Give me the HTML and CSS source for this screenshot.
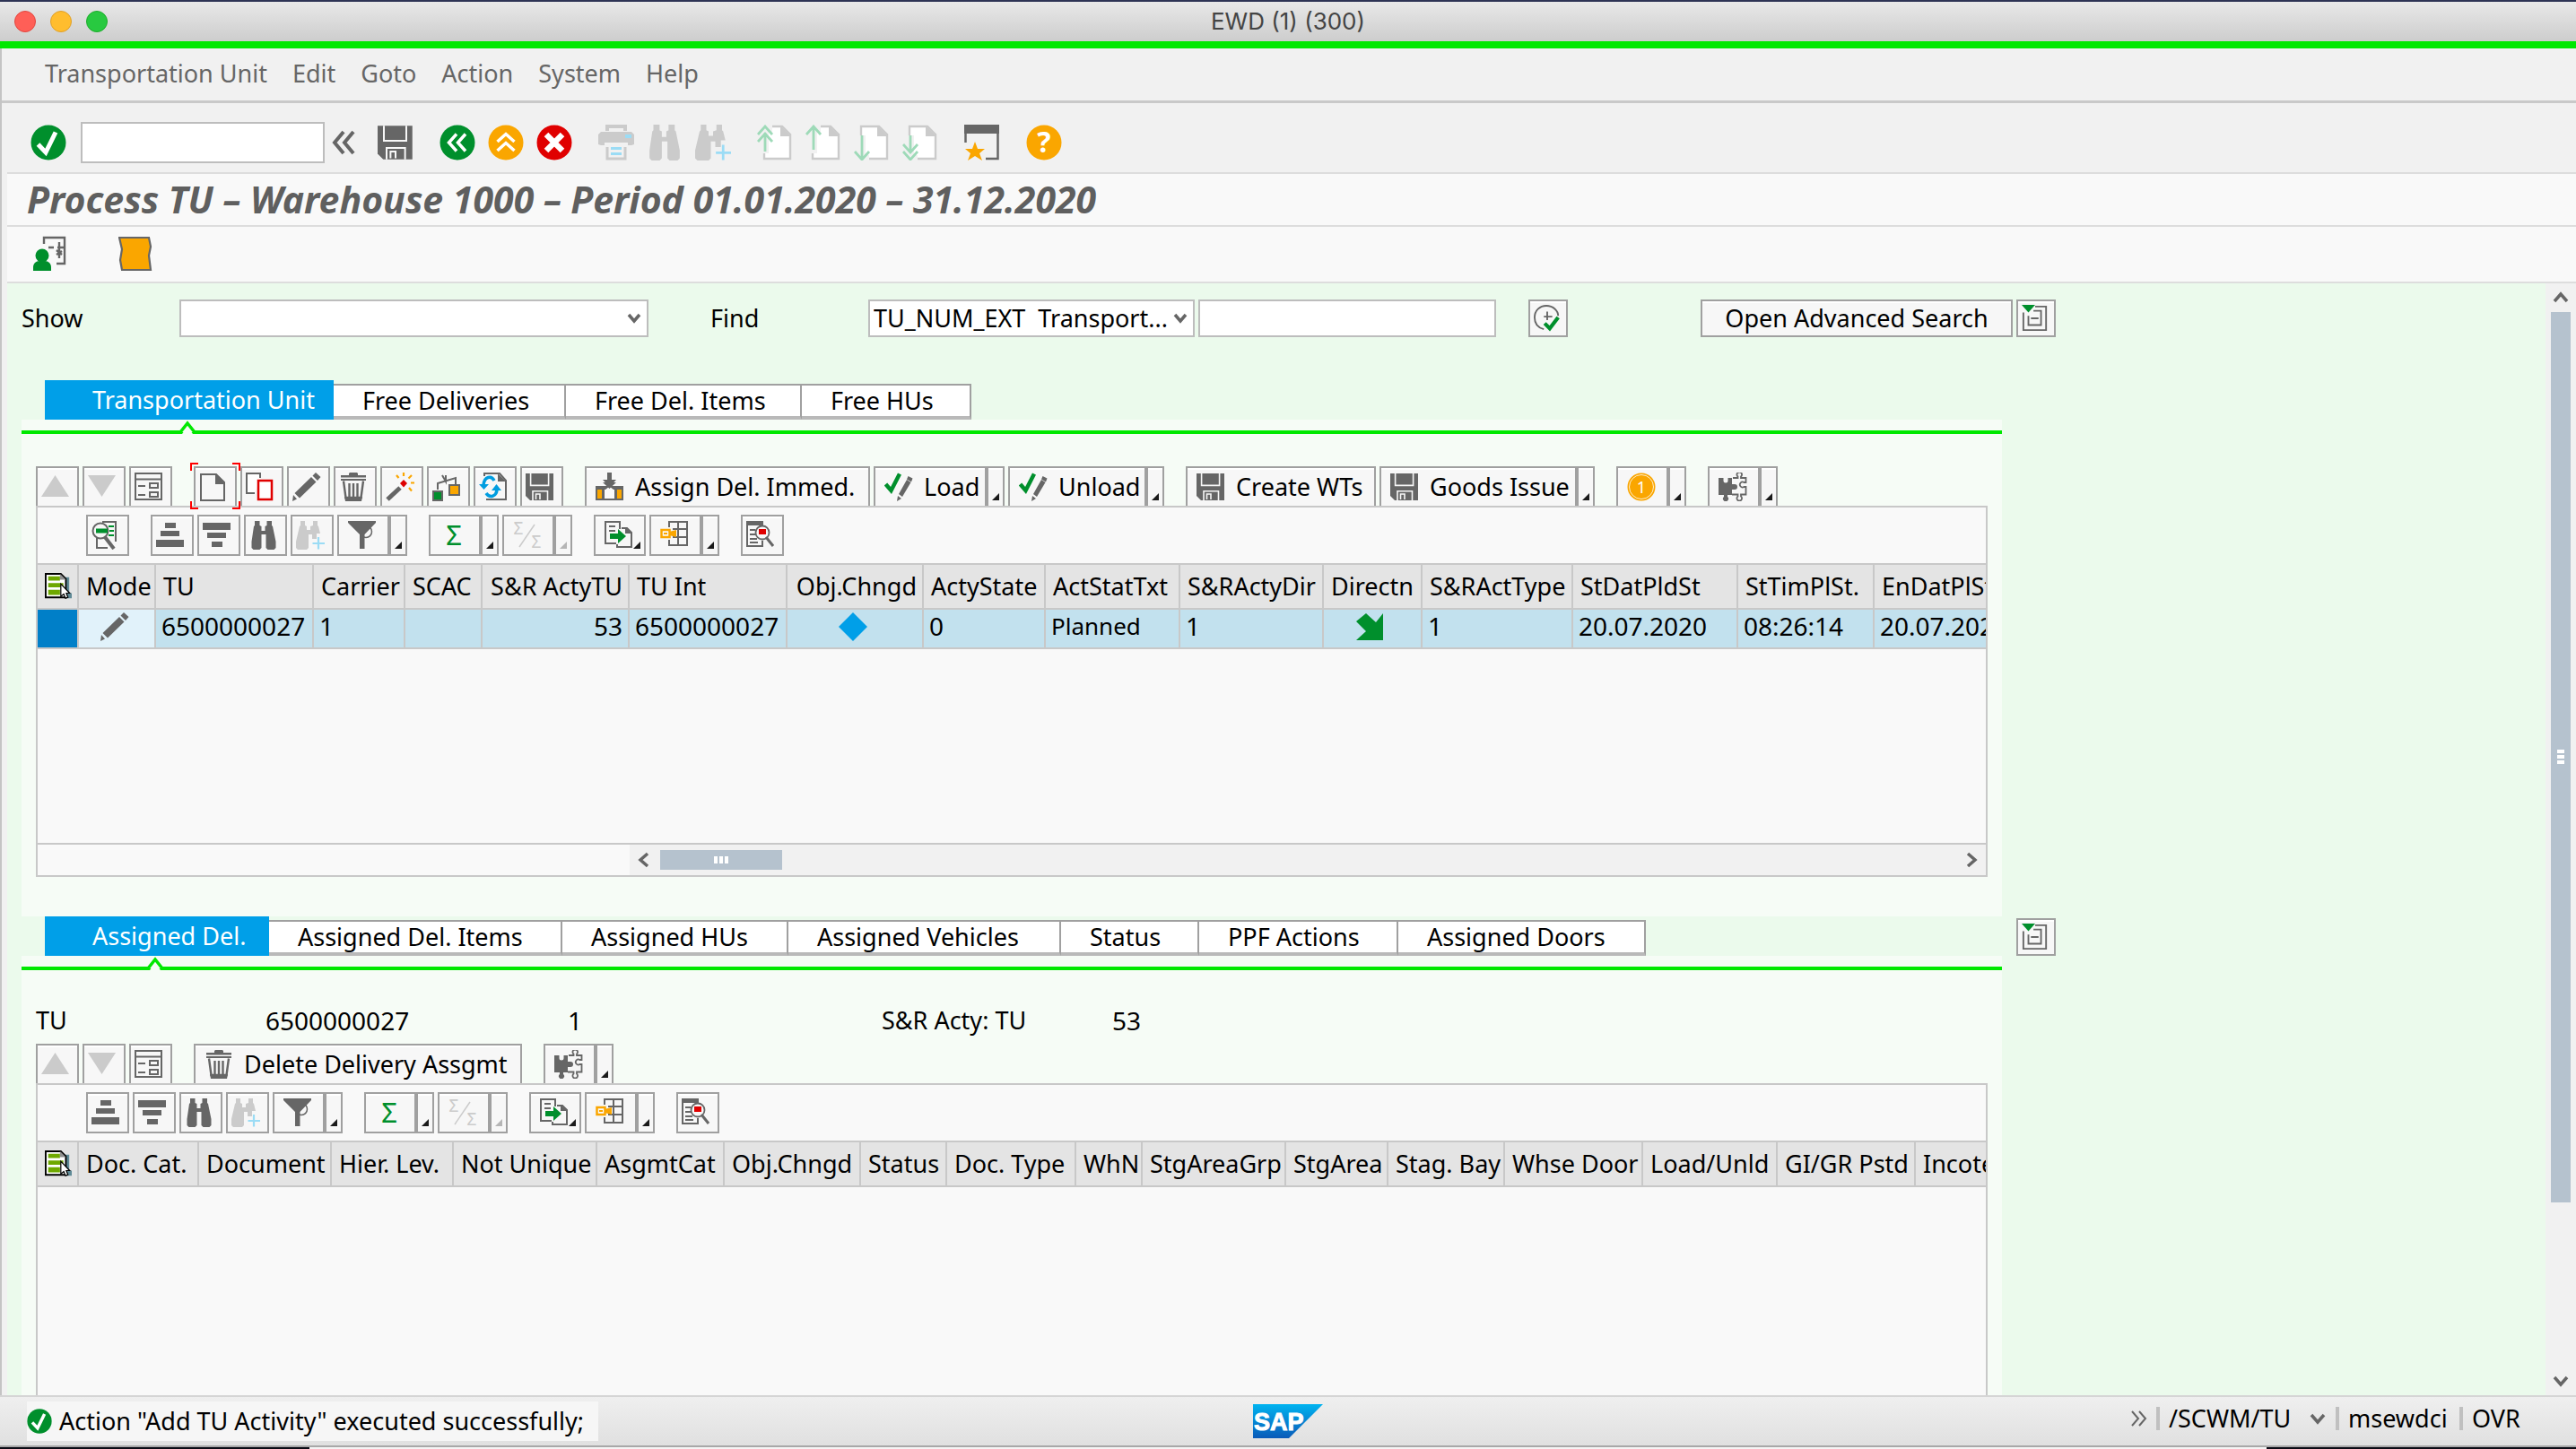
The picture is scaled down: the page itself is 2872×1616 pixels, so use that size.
FILE: index.html
```html
<!DOCTYPE html>
<html lang="en">
<head>
<meta charset="utf-8">
<title>EWD (1) (300)</title>
<link rel="stylesheet" href="styles.css">
</head>
<body>
<svg class="sprite" aria-hidden="true">
  <symbol id="i-save" viewBox="0 0 32 32"><path fill="currentColor" d="M0 1h31v30H5l-5-5z"/><path fill="none" stroke="#f7f7f7" stroke-width="1.6" d="M5.6 1v13.4h20V1M8 31V20.8h16.500V31M11.500 30v-6h4.500v6"/></symbol>
  <symbol id="i-binoc" viewBox="0 0 32 32"><path fill="currentColor" d="M6 0h5.500v5l2 1v5h4V6l2-1V0H25v5l1 1 3.500 17v7l-2 2h-7l-2-2V15h-5v15l-2 2h-7l-2-2v-7L5 6l1-1z"/></symbol>
  <symbol id="i-binocplus" viewBox="0 0 32 32"><path fill="#cbcbcb" d="M5 0h5v5l2 1v4h4V6l3-1V0h5v5l1 1 2 8h-4v6h-5v-5h-4v15l-2 2H2l-2-2v-7L4 6l1-1z"/><path stroke="#9bdcf5" stroke-width="2.200" d="M25 18v13.500M18.500 25H32"/></symbol>
  <symbol id="i-up" viewBox="0 0 32 32"><path fill="#cbcbcb" d="M15.500 3 31 27H0z"/></symbol>
  <symbol id="i-down" viewBox="0 0 32 32"><path fill="#cbcbcb" d="M0 3h31L15.500 27z"/></symbol>
  <symbol id="i-form" viewBox="0 0 32 32"><path fill="none" stroke="#666" stroke-width="2" d="M1 1h29v29H1zM1 7.500h29M17 12h9v5h-9zM17 22h9v5h-9zM4 15h8M4 25h8"/></symbol>
  <symbol id="i-new" viewBox="0 0 32 32"><path fill="none" stroke="#666" stroke-width="2" d="M2 2h17l9 9v20H2z"/><path fill="#666" d="M18 1v12h11z"/></symbol>
  <symbol id="i-copy" viewBox="0 0 32 32"><path fill="#fff" stroke="#666" stroke-width="2" d="M16 6V1H1v22h9"/><path fill="#fff" stroke="#e00000" stroke-width="2.500" d="M14 9h15v21H14z"/></symbol>
  <symbol id="i-pencil" viewBox="0 0 32 32"><path fill="#666" d="m0 32 1-7 4 4.500zM2.500 23 21 5l5.500 5.500L8 28.500zM22.500 3.500 26 0l5.500 5-3.500 4z"/></symbol>
  <symbol id="i-trash" viewBox="0 0 32 32"><path fill="#666" d="M11 1 12 0h8l1 1v2h9v2.500H2V3h9zM2 7h28v2H2z"/><path fill="none" stroke="#666" stroke-width="2.400" d="M5 9.500 7.500 28h17L27 9.500M11.500 12v15M16 12v15M20.500 12v15"/><path fill="#666" d="M6 27h20l-1 5H7z"/></symbol>
  <symbol id="i-wand" viewBox="0 0 32 32"><path stroke="#666" stroke-width="5" d="M2 30 16 17"/><path fill="#d00" d="m20 8 4 4-4 4.500-4-4.500z"/><path stroke="#faa600" stroke-width="2.200" d="M20 0v4M12 3l2.500 3M29 3l-3.500 3.500M28 11.500h4M26 17l3 3.500"/></symbol>
  <symbol id="i-assignbox" viewBox="0 0 32 32"><path fill="none" stroke="#666" stroke-width="2" d="M6 19v-7L26 6v8M15 3v7l-4-7"/><path fill="#008f2c" stroke="#666" stroke-width="2" d="M1 21h10v10H1z"/><path fill="#faa600" stroke="#666" stroke-width="2" d="M19 14h11v11H19z"/></symbol>
  <symbol id="i-refresh" viewBox="0 0 32 32"><path fill="none" stroke="#666" stroke-width="2" d="M6 4V1h17l7 8v21H8"/><path fill="#666" d="M21 1v9h9z"/><path fill="none" stroke="#009de0" stroke-width="3.500" d="M17 9c-3-6-11-5-12 5M8 23c4 6 12 4 12-5"/><path fill="#009de0" d="M0 13h11l-5.500 6zM14 20h11l-5.500-7z"/></symbol>
  <symbol id="i-inbox" viewBox="0 0 32 32"><path fill="#666" d="M13 0h5v8h5l-7.500 8L8 8h5zM0 15h31v16H0z"/><path fill="#faa600" d="M2 19h5v10H2zM24 19h5v10h-5z"/><path fill="#fafafa" d="M10 19h1l4.500-3.500L20 19h1v10H10z"/><path fill="#666" d="m8 11 7.500 7 7.500-7z"/></symbol>
  <symbol id="i-load" viewBox="0 0 32 32"><path fill="none" stroke="#008f2c" stroke-width="4.500" d="m1.500 13 6 7L17 1.500"/><path fill="#666" d="m14 32 1-6 4 3zM16 24 25 8l4.500 3-9.500 16zM26.500 4l5 2.500-1.500 4-5-3z"/></symbol>
  <symbol id="i-coin" viewBox="0 0 32 32"><circle cx="16" cy="16" r="15.500" fill="#faa600"/><circle cx="16" cy="16" r="13.500" fill="none" stroke="#fff" stroke-width=".8"/><text x="16" y="22.500" text-anchor="middle" font-size="18" fill="#fff">1</text></symbol>
  <symbol id="i-puzzle" viewBox="0 0 32 32"><path fill="#666" d="M0 6h5.500v3a2.500 2.500 0 0 0 5 0V6H15v7h3a3 3 0 0 1 0 6h-3v6h-5v2a3 3 0 1 1-4 0v-2H0z"/><path fill="none" stroke="#666" stroke-width="1.800" d="M16 6h5.500V4.500a2.800 2.800 0 1 1 3.500 0V6h5.500v5h-2a3 3 0 1 0 0 5h2v8.500H25v2a2.800 2.800 0 1 1-3.500 0v-2H15"/></symbol>
  <symbol id="i-detail" viewBox="0 0 32 32"><path fill="none" stroke="#666" stroke-width="2" d="M12 1h15v22M6 18v12h12"/><circle cx="10" cy="11" r="8.500" fill="#f7f7f7" stroke="#666" stroke-width="2"/><path stroke="#666" stroke-width="4" d="m15 18 10 13"/><path stroke="#008f2c" stroke-width="5" d="M5 11h13"/><path stroke="#008f2c" stroke-width="2" d="M19 6h6M20 11h5M19 16h6"/></symbol>
  <symbol id="i-asc" viewBox="0 0 32 32"><path fill="#666" d="M10 2h12v6H10zM5 11h21v6H5zM0 21h31v8H0z"/></symbol>
  <symbol id="i-desc" viewBox="0 0 32 32"><path fill="#666" d="M0 2h31v8H0zM5 13h21v6H5zM10 23h12v6H10z"/></symbol>
  <symbol id="i-funnel" viewBox="0 0 32 32"><circle cx="20" cy="12" r="6.500" fill="none" stroke="#666" stroke-width="1.500"/><path fill="#666" d="M0 0h31v2L18.500 15v16H13V15L0 2z"/></symbol>
  <symbol id="i-sum" viewBox="0 0 32 32"><text x="16" y="27" text-anchor="middle" font-size="31" fill="#008f2c">Σ</text></symbol>
  <symbol id="i-subsum" viewBox="0 0 32 32"><g fill="#cbcbcb"><text x="6" y="15" text-anchor="middle" font-size="19">Σ</text><text x="26" y="30" text-anchor="middle" font-size="19">Σ</text></g><path stroke="#cbcbcb" stroke-width="1.500" d="M7 29 24 4"/></symbol>
  <symbol id="i-export" viewBox="0 0 32 32"><path fill="none" stroke="#666" stroke-width="2" d="M17 9V1H1v24h12M5 6h7M5 11h7M19 8h6l5 5v16H14v-3"/><path fill="#666" d="M23 7v7h8z"/><path fill="#008f2c" d="M6 14h9V9l9 8-9 8v-5H6z"/></symbol>
  <symbol id="i-layout" viewBox="0 0 32 32"><path fill="none" stroke="#666" stroke-width="2" d="M9 1h22M30 1v26M9 27h22M20 1v26M10 1v6M10 21v6M14 9h16M14 18h16"/><path fill="#f9f9f9" stroke="#faa600" stroke-width="2.500" d="M1.500 10h9v8h-9z"/><path fill="#faa600" d="M4 13h4v2H4zM10 12l8-2v8l-8-2z"/></symbol>
  <symbol id="i-audit" viewBox="0 0 32 32"><path fill="#666" d="M0 0h19v5H0z"/><path fill="none" stroke="#666" stroke-width="2" d="M1 3v25h17v-6M4 10h6M4 15h7M4 20h8M4 24h9"/><circle cx="18" cy="13" r="7.500" fill="#f7f7f7" stroke="#666" stroke-width="1.800"/><path stroke="#666" stroke-width="3" d="m22 18 8 10"/><path fill="#e00000" d="M14 9h8v6h-8z"/></symbol>
  <symbol id="i-clock" viewBox="0 0 32 32"><path fill="none" stroke="#666" stroke-width="2" d="M12 29C4 27 1 21 1 15 1 7 7 1 15 1s14 6 14 12M16 8v10M12 14h10"/><path fill="none" stroke="#008f2c" stroke-width="4.500" d="m13 22 6 6 10-13"/></symbol>
  <symbol id="i-collapse" viewBox="0 0 32 32"><path fill="none" stroke="#666" stroke-width="2" d="M2 9v21h27V2H16M8 13v11h15V7h-9M11 16h9"/><path fill="#008f2c" d="M0 0h16L8 9z"/></symbol>
  <symbol id="i-cols" viewBox="0 0 32 32"><path fill="#5f8a96" d="M24 5h5v19h3v6H24z"/><path fill="#fff" stroke="#000" stroke-width="2" d="M1 1h18l6 6v22H1z"/><path fill="#6ea800" d="M4 4h14v5H4zM4 12h18v5H4zM4 20h14v6H4z"/><path fill="#8f8f8f" d="M18 1v7h7z"/><path fill="#fff" stroke="#000" stroke-width="1.300" d="M19 13v15l3.500-3 2 5 3-1-2-5h4z"/></symbol>
  <symbol id="i-ok" viewBox="0 0 40 40"><circle cx="20" cy="20" r="19.500" fill="#008f2c"/><path fill="none" stroke="#fff" stroke-width="5" d="m8.500 22 8.500 9L28 8.500"/></symbol>
  <symbol id="i-fold" viewBox="0 0 32 40"><path fill="none" stroke="#666" stroke-width="4" d="M17 8 7 20l10 12M28 8 18 20l10 12"/></symbol>
  <symbol id="i-back" viewBox="0 0 40 40"><circle cx="20" cy="20" r="19.500" fill="#008f2c"/><path fill="none" stroke="#fff" stroke-width="3.500" d="m19 10.500-8.500 9.500 8.500 9.500M29 10.500 20.500 20l8.500 9.500"/></symbol>
  <symbol id="i-exit" viewBox="0 0 40 40"><circle cx="20" cy="20" r="19.500" fill="#faa600"/><path fill="none" stroke="#fff" stroke-width="3.500" d="m10.500 19 9.500-8.500 9.500 8.500M10.500 29l9.500-8.500 9.500 8.500"/></symbol>
  <symbol id="i-cancel" viewBox="0 0 40 40"><circle cx="20" cy="20" r="19.500" fill="#e00000"/><path stroke="#fff" stroke-width="6.500" d="m11 11 18 18M29 11 11 29"/></symbol>
  <symbol id="i-print" viewBox="0 0 40 40"><path fill="#cbcbcb" d="M8 0h24v7h-4V4H12v3H8zM3 8h34l3 3v11l-3 1h-4v-3H7v3H3l-3-1V11z"/><path fill="none" stroke="#cbcbcb" stroke-width="3" d="M10 25v13h20V25"/><path fill="#9bdcf5" d="M30 11h7v4h-7zM14 25h12v3H14zM14 31h12v3H14z"/></symbol>
  <symbol id="i-page" viewBox="0 0 40 40"><path fill="#fff" stroke="#cbcbcb" stroke-width="2.400" d="M8 2h20l9 9v27H8z"/><path fill="#cbcbcb" d="M26 1v12h12z"/></symbol>
  <symbol id="i-first" viewBox="0 0 40 40"><use href="#i-page"/><path stroke="#f1f1f1" stroke-width="10" d="M8 0v32M12 0v8"/><path fill="none" stroke="#9edab8" stroke-width="2.800" d="M9 30V9M1 19l8-9 8 9M1 11l8-9 8 9"/></symbol>
  <symbol id="i-prev" viewBox="0 0 40 40"><use href="#i-page"/><path stroke="#f1f1f1" stroke-width="10" d="M8 0v32M12 0v8"/><path fill="none" stroke="#9edab8" stroke-width="2.800" d="M9 28V2M1 11l8-9 8 9"/></symbol>
  <symbol id="i-next" viewBox="0 0 40 40"><use href="#i-page"/><path stroke="#f1f1f1" stroke-width="10" d="M8 12v28M12 34v6"/><path fill="none" stroke="#9edab8" stroke-width="2.800" d="M9 12v26M1 30l8 9 8-9"/></symbol>
  <symbol id="i-last" viewBox="0 0 40 40"><use href="#i-page"/><path stroke="#f1f1f1" stroke-width="10" d="M8 12v28M12 34v6"/><path fill="none" stroke="#9edab8" stroke-width="2.800" d="M9 12v19M1 22l8 9 8-9M1 30l8 9 8-9"/></symbol>
  <symbol id="i-session" viewBox="0 0 40 40"><path fill="#666" d="M0 0h39v10H0z"/><path fill="none" stroke="#666" stroke-width="2.500" d="M1.500 9v11M37.500 9v29H24"/><path fill="#faa600" d="m12 19 3 8h8l-6 5 3 8-8-5-8 5 3-8-6-5h8z"/></symbol>
  <symbol id="i-help" viewBox="0 0 40 40"><circle cx="20" cy="20" r="19.500" fill="#faa600"/><text x="20" y="31" text-anchor="middle" font-size="32" font-weight="700" fill="#fff">?</text></symbol>
  <symbol id="i-user" viewBox="0 0 40 40"><path fill="none" stroke="#666" stroke-width="2.400" d="M13 9V2h23v29H27M18 13h6M28 13h8M30 7v18M27 21l6-4M27 16l6 5"/><circle cx="11" cy="22" r="7.500" fill="#008f2c"/><path fill="#008f2c" d="M1 39v-4c0-4 3-7 7-7h6c4 0 7 3 7 7v4z"/></symbol>
  <symbol id="i-note" viewBox="0 0 40 40"><path fill="#faa600" stroke="#666" stroke-width="2.200" d="M1 2h33l2 10-2 10 2 16H4L2 27l2-12z"/></symbol>
  <symbol id="i-arrowse" viewBox="0 0 32 32"><path fill="#008f2c" d="m11 1 11 10 8-10v30H0l11-10L0 10z"/></symbol>
  <symbol id="i-diamond" viewBox="0 0 32 32"><path fill="#009fe8" d="m16 0 16 16-16 16L0 16z"/></symbol>
  <symbol id="i-drop" viewBox="0 0 8 8"><path fill="currentColor" d="M8 0v8H0z"/></symbol>
  <symbol id="i-chev" viewBox="0 0 20 20"><path fill="none" stroke="#666" stroke-width="3.500" d="m3 6 7 8 7-8"/></symbol>
  <symbol id="i-notch" viewBox="0 0 20 16"><path fill="#f6fcf6" stroke="#00e800" stroke-width="3.500" d="M0 14h2l8-10 8 10h2"/><path fill="#f6fcf6" d="M4 16 10 8l6 8z"/></symbol>
</svg>

<header class="titlebar">
  <div class="lights"><i class="light red"></i><i class="light yellow"></i><i class="light green"></i></div>
  <span class="window-title">EWD (1) (300)</span>
</header>

<div class="frame">
  <nav class="menubar">
    <button>Transportation Unit</button><button>Edit</button><button>Goto</button><button>Action</button><button>System</button><button>Help</button>
  </nav>

  <div class="stdbar">
    <button class="plain" aria-label="Enter"><svg><use href="#i-ok"/></svg></button>
    <input class="command" type="text" aria-label="Command">
    <button class="plain fold" aria-label="Hide command field"><svg><use href="#i-fold"/></svg></button>
    <div class="stdgroup"><button class="plain" aria-label="Save"><svg><use href="#i-save"/></svg></button></div>
    <div class="stdgroup">
      <button class="plain" aria-label="Back"><svg><use href="#i-back"/></svg></button>
      <button class="plain" aria-label="Exit"><svg><use href="#i-exit"/></svg></button>
      <button class="plain" aria-label="Cancel"><svg><use href="#i-cancel"/></svg></button>
    </div>
    <div class="stdgroup off">
      <button class="plain" aria-label="Print"><svg><use href="#i-print"/></svg></button>
      <button class="plain" aria-label="Find"><svg><use href="#i-binoc"/></svg></button>
      <button class="plain" aria-label="Find next"><svg><use href="#i-binocplus"/></svg></button>
    </div>
    <div class="stdgroup">
      <button class="plain" aria-label="First page"><svg><use href="#i-first"/></svg></button>
      <button class="plain" aria-label="Previous page"><svg><use href="#i-prev"/></svg></button>
      <button class="plain" aria-label="Next page"><svg><use href="#i-next"/></svg></button>
      <button class="plain" aria-label="Last page"><svg><use href="#i-last"/></svg></button>
    </div>
    <div class="stdgroup"><button class="plain" aria-label="New session"><svg><use href="#i-session"/></svg></button></div>
    <div class="stdgroup"><button class="plain" aria-label="Help"><svg><use href="#i-help"/></svg></button></div>
  </div>

  <h1 class="screen-title">Process TU – Warehouse 1000 – Period 01.01.2020 – 31.12.2020</h1>

  <div class="appbar">
    <button class="plain" aria-label="Partner"><svg><use href="#i-user"/></svg></button>
    <button class="plain" aria-label="Note"><svg><use href="#i-note"/></svg></button>
  </div>

  <div class="body">
    <main class="work">
      <form class="search">
        <label class="lbl-show" for="show">Show</label>
        <select id="show" class="sel-show"><option></option></select>
        <label class="lbl-find" for="find">Find</label>
        <select id="find" class="sel-find"><option>TU_NUM_EXT&nbsp; Transport...</option></select>
        <input class="find-value" type="text" aria-label="Find value">
        <button type="button" class="btn execute" aria-label="Execute"><svg><use href="#i-clock"/></svg></button>
        <button type="button" class="btn advanced">Open Advanced Search</button>
        <button type="button" class="btn" aria-label="Collapse"><svg><use href="#i-collapse"/></svg></button>
      </form>

      <section class="block">
        <div class="column">
          <div class="tabs">
            <button class="tab active w322">Transportation Unit<svg class="notch"><use href="#i-notch"/></svg></button>
            <button class="tab w259">Free Deliveries</button><button class="tab w263">Free Del. Items</button><button class="tab w189">Free HUs</button>
          </div>
          <div class="panel">
            <div class="toolbar upper">
              <div class="group">
                <button class="btn" aria-label="Previous"><svg><use href="#i-up"/></svg></button>
                <button class="btn" aria-label="Next"><svg><use href="#i-down"/></svg></button>
                <button class="btn" aria-label="Form view"><svg><use href="#i-form"/></svg></button>
              </div>
              <div class="group">
                <button class="btn focused" aria-label="Create"><svg><use href="#i-new"/></svg><svg class="corners" viewBox="0 0 56 52"><path fill="none" stroke="#f00" stroke-width="2" d="M1 9V1h8M47 1h8v8M55 43v8h-8M9 51H1v-8"/></svg></button>
                <button class="btn" aria-label="Copy"><svg><use href="#i-copy"/></svg></button>
                <button class="btn" aria-label="Change"><svg><use href="#i-pencil"/></svg></button>
                <button class="btn" aria-label="Delete"><svg><use href="#i-trash"/></svg></button>
                <button class="btn" aria-label="Generate"><svg><use href="#i-wand"/></svg></button>
                <button class="btn" aria-label="Assign"><svg><use href="#i-assignbox"/></svg></button>
                <button class="btn" aria-label="Refresh"><svg><use href="#i-refresh"/></svg></button>
                <button class="btn" aria-label="Save"><svg><use href="#i-save"/></svg></button>
              </div>
              <div class="group">
                <button class="btn wide w318"><svg><use href="#i-inbox"/></svg>Assign Del. Immed.</button>
                <div class="split"><button class="btn wide w126"><svg><use href="#i-load"/></svg>Load</button><button class="btn more" aria-label="Load options"><svg><use href="#i-drop"/></svg></button></div>
                <div class="split"><button class="btn wide w154"><svg><use href="#i-load"/></svg>Unload</button><button class="btn more" aria-label="Unload options"><svg><use href="#i-drop"/></svg></button></div>
              </div>
              <div class="group">
                <button class="btn wide w212"><svg><use href="#i-save"/></svg>Create WTs</button>
                <div class="split"><button class="btn wide w220"><svg><use href="#i-save"/></svg>Goods Issue</button><button class="btn more" aria-label="Goods issue options"><svg><use href="#i-drop"/></svg></button></div>
              </div>
              <div class="group"><div class="split"><button class="btn mid" aria-label="Costs"><svg><use href="#i-coin"/></svg></button><button class="btn more" aria-label="Cost options"><svg><use href="#i-drop"/></svg></button></div></div>
              <div class="group"><div class="split"><button class="btn mid" aria-label="Services"><svg><use href="#i-puzzle"/></svg></button><button class="btn more" aria-label="Service options"><svg><use href="#i-drop"/></svg></button></div></div>
            </div>
            <div class="grid grid-top">
              <div class="toolbar inner">
                <div class="group"><button class="btn" aria-label="Details"><svg><use href="#i-detail"/></svg></button></div>
                <div class="group">
                  <button class="btn" aria-label="Sort ascending"><svg><use href="#i-asc"/></svg></button>
                  <button class="btn" aria-label="Sort descending"><svg><use href="#i-desc"/></svg></button>
                  <button class="btn" aria-label="Find"><svg><use href="#i-binoc"/></svg></button>
                  <button class="btn" aria-label="Find next"><svg><use href="#i-binocplus"/></svg></button>
                  <div class="split"><button class="btn mid" aria-label="Filter"><svg><use href="#i-funnel"/></svg></button><button class="btn more" aria-label="Filter options"><svg><use href="#i-drop"/></svg></button></div>
                </div>
                <div class="group">
                  <div class="split"><button class="btn mid" aria-label="Total"><svg><use href="#i-sum"/></svg></button><button class="btn more" aria-label="Total options"><svg><use href="#i-drop"/></svg></button></div>
                  <div class="split"><button class="btn mid" aria-label="Subtotal"><svg><use href="#i-subsum"/></svg></button><button class="btn more dim" aria-label="Subtotal options"><svg><use href="#i-drop"/></svg></button></div>
                </div>
                <div class="group">
                  <button class="btn mid menu" aria-label="Export"><svg><use href="#i-export"/></svg><svg class="drop"><use href="#i-drop"/></svg></button>
                  <div class="split"><button class="btn mid" aria-label="Layout"><svg><use href="#i-layout"/></svg></button><button class="btn more" aria-label="Layout options"><svg><use href="#i-drop"/></svg></button></div>
                </div>
                <div class="group"><button class="btn" aria-label="Audit"><svg><use href="#i-audit"/></svg></button></div>
              </div>
              <div class="table-wrap">
                <table class="units">
                  <colgroup><col class="c46"><col class="c86"><col class="c176"><col class="c102"><col class="c86"><col class="c164"><col class="c176"><col class="c152"><col class="c136"><col class="c150"><col class="c160"><col class="c110"><col class="c168"><col class="c184"><col class="c152"><col class="c184"></colgroup>
                  <thead><tr><th class="pick"><svg><use href="#i-cols"/></svg></th><th>Mode</th><th>TU</th><th>Carrier</th><th>SCAC</th><th class="num">S&amp;R ActyTU</th><th>TU Int</th><th class="num">Obj.Chngd</th><th>ActyState</th><th>ActStatTxt</th><th>S&amp;RActyDir</th><th>Directn</th><th>S&amp;RActType</th><th>StDatPldSt</th><th>StTimPlSt.</th><th>EnDatPlSt.</th></tr></thead>
                  <tbody><tr><td class="mark"></td><td class="mode"><svg><use href="#i-pencil"/></svg></td><td>6500000027</td><td>1</td><td></td><td class="num">53</td><td>6500000027</td><td class="icon"><svg><use href="#i-diamond"/></svg></td><td>0</td><td class="word">Planned</td><td>1</td><td class="icon"><svg><use href="#i-arrowse"/></svg></td><td>1</td><td>20.07.2020</td><td>08:26:14</td><td>20.07.2020</td></tr></tbody>
                </table>
              </div>
              <div class="hscroll">
                <div class="track">
                  <svg class="left"><use href="#i-chev"/></svg>
                  <div class="thumb"><i></i><i></i><i></i></div>
                  <svg class="right"><use href="#i-chev"/></svg>
                </div>
              </div>
            </div>
          </div>
        </div>
      </section>

      <section class="block last">
        <div class="column">
          <div class="tabs">
            <button class="tab active w250">Assigned Del.<svg class="notch"><use href="#i-notch"/></svg></button>
            <button class="tab w327">Assigned Del. Items</button><button class="tab w252">Assigned HUs</button><button class="tab w304">Assigned Vehicles</button><button class="tab w154">Status</button><button class="tab w222">PPF Actions</button><button class="tab w276">Assigned Doors</button>
          </div>
          <div class="panel">
            <div class="facts"><span>TU</span><span class="figure">6500000027</span><span class="figure">1</span><span>S&amp;R Acty: TU</span><span class="figure">53</span></div>
            <div class="toolbar upper">
              <div class="group">
                <button class="btn" aria-label="Previous"><svg><use href="#i-up"/></svg></button>
                <button class="btn" aria-label="Next"><svg><use href="#i-down"/></svg></button>
                <button class="btn" aria-label="Form view"><svg><use href="#i-form"/></svg></button>
              </div>
              <div class="group"><button class="btn wide w366"><svg><use href="#i-trash"/></svg>Delete Delivery Assgmt</button></div>
              <div class="group"><div class="split"><button class="btn mid" aria-label="Services"><svg><use href="#i-puzzle"/></svg></button><button class="btn more" aria-label="Service options"><svg><use href="#i-drop"/></svg></button></div></div>
            </div>
            <div class="grid">
              <div class="toolbar inner">
                <div class="group">
                  <button class="btn" aria-label="Sort ascending"><svg><use href="#i-asc"/></svg></button>
                  <button class="btn" aria-label="Sort descending"><svg><use href="#i-desc"/></svg></button>
                  <button class="btn" aria-label="Find"><svg><use href="#i-binoc"/></svg></button>
                  <button class="btn" aria-label="Find next"><svg><use href="#i-binocplus"/></svg></button>
                  <div class="split"><button class="btn mid" aria-label="Filter"><svg><use href="#i-funnel"/></svg></button><button class="btn more" aria-label="Filter options"><svg><use href="#i-drop"/></svg></button></div>
                </div>
                <div class="group">
                  <div class="split"><button class="btn mid" aria-label="Total"><svg><use href="#i-sum"/></svg></button><button class="btn more" aria-label="Total options"><svg><use href="#i-drop"/></svg></button></div>
                  <div class="split"><button class="btn mid" aria-label="Subtotal"><svg><use href="#i-subsum"/></svg></button><button class="btn more dim" aria-label="Subtotal options"><svg><use href="#i-drop"/></svg></button></div>
                </div>
                <div class="group">
                  <button class="btn mid menu" aria-label="Export"><svg><use href="#i-export"/></svg><svg class="drop"><use href="#i-drop"/></svg></button>
                  <div class="split"><button class="btn mid" aria-label="Layout"><svg><use href="#i-layout"/></svg></button><button class="btn more" aria-label="Layout options"><svg><use href="#i-drop"/></svg></button></div>
                </div>
                <div class="group"><button class="btn" aria-label="Audit"><svg><use href="#i-audit"/></svg></button></div>
              </div>
              <div class="table-wrap">
                <table class="deliveries">
                  <colgroup><col class="c46"><col class="c134"><col class="c148"><col class="c136"><col class="c160"><col class="c142"><col class="c152"><col class="c96"><col class="c144"><col class="c74"><col class="c160"><col class="c114"><col class="c130"><col class="c154"><col class="c150"><col class="c154"><col class="c160"></colgroup>
                  <thead><tr><th class="pick"><svg><use href="#i-cols"/></svg></th><th>Doc. Cat.</th><th>Document</th><th>Hier. Lev.</th><th>Not Unique</th><th>AsgmtCat</th><th>Obj.Chngd</th><th>Status</th><th>Doc. Type</th><th>WhN</th><th>StgAreaGrp</th><th>StgArea</th><th>Stag. Bay</th><th>Whse Door</th><th>Load/Unld</th><th>GI/GR Pstd</th><th>Incoterms</th></tr></thead>
                </table>
              </div>
            </div>
          </div>
        </div>
        <aside class="side"><button class="btn" aria-label="Collapse"><svg><use href="#i-collapse"/></svg></button></aside>
      </section>
    </main>
    <div class="vscroll">
      <svg class="up"><use href="#i-chev"/></svg>
      <div class="vtrack"><div class="thumb"><i></i><i></i><i></i></div></div>
      <svg><use href="#i-chev"/></svg>
    </div>
  </div>
</div>

<footer class="status">
  <div class="message"><svg><use href="#i-ok"/></svg>Action "Add TU Activity" executed successfully;</div>
  <svg class="logo" viewBox="0 0 78 38"><defs><linearGradient id="sap" x1="0" y1="0" x2="0" y2="1"><stop offset="0" stop-color="#00b4f0"/><stop offset="1" stop-color="#0a5ab8"/></linearGradient></defs><path fill="url(#sap)" d="M0 0h78L40 38H0z"/><text x="1" y="29" font-size="27" font-weight="700" fill="#fff" stroke="#fff" stroke-width="1">SAP</text></svg>
  <div class="session">
    <svg class="expand" viewBox="0 0 18 18"><path fill="none" stroke="#666" stroke-width="2" d="m1 1 7 8-7 8M9 1l7 8-7 8"/></svg>
    <span class="cell code">/SCWM/TU<svg><use href="#i-chev"/></svg></span><span class="cell host">msewdci</span><span class="cell mode-ovr">OVR</span>
  </div>
</footer>
</body>
</html>
```
FILE: styles.css
```css
* { box-sizing: border-box; }
html, body { height: 100%; margin: 0; }
body {
  display: flex;
  flex-direction: column;
  background: #f1f1f1;
  color: #000;
  font: 27px/36px "Noto Sans", "Open Sans", sans-serif;
}
/* Desktop and neighbouring window showing under the bottom edge */
body::after { content: ""; flex: none; height: 2px; background: linear-gradient(90deg, #0b0b14 12%, #f4f4f4 12%, #f4f4f4 88%, #0b0b14 88%); }
button, input, select { font: inherit; color: inherit; margin: 0; padding: 0; border-radius: 0; }
svg { display: block; flex: none; overflow: visible; }
.sprite { display: none; }

/* Window title */
.titlebar {
  display: grid;
  grid-template-columns: 1fr auto 1fr;
  align-items: center;
  height: 54px;
  flex: none;
  padding: 0 16px;
  background: linear-gradient(#e8e8e8, #cdcdcd);
  border-top: 2px solid #2d3354;
  border-bottom: 8px solid #00e800;
  color: #444;
}
.lights { display: flex; gap: 16px; }
.light { width: 24px; height: 24px; border-radius: 50%; border: 1px solid; }
.red { background: #ff5f57; border-color: #e2463f; }
.yellow { background: #ffbd2e; border-color: #e0a028; }
.green { background: #28c940; border-color: #1dad2b; }
.window-title { font: 26px/36px "Inter", sans-serif; }

.frame { flex: 1; min-height: 0; display: flex; flex-direction: column; border-left: 2px solid #c4c4c4; padding-left: 6px; }

.menubar {
  display: flex;
  gap: 28px;
  height: 61px;
  flex: none;
  margin-left: -6px;
  padding: 10px 0 0 48px;
  align-items: flex-start;
  border-bottom: 3px solid #c9c9c9;
}
.menubar button { border: 0; background: none; color: #666; line-height: 36px; }

.plain { border: 0; background: none; color: #666; width: 40px; height: 40px; }
.plain svg { width: 100%; height: 100%; }
.stdbar { display: flex; align-items: center; height: 79px; flex: none; padding: 10px 0 0 26px; border-bottom: 2px solid #ddd; }
.command { width: 272px; height: 46px; margin-left: 16px; border: 2px solid #bdbdbd; background: #fff; }
.fold { width: 32px; margin: 0 -6px 0 4px; }
.stdgroup { display: flex; gap: 14px; margin-left: 29px; }
.off .plain { color: #cbcbcb; }

.screen-title {
  margin: 0;
  padding: 0 22px;
  flex: none;
  height: 59px;
  background: #f9f9f9;
  border-bottom: 2px solid #ddd;
  color: #5f5f5f;
  font-size: 41px;
  line-height: 56px;
  font-style: italic;
  font-weight: 700;
}
.appbar { display: flex; gap: 56px; align-items: center; height: 63px; flex: none; padding: 0 0 2px 28px; background: #f9f9f9; border-bottom: 2px solid #ddd; }

.body { flex: 1; min-height: 0; display: flex; }
.work { flex: 1; min-width: 0; display: flex; flex-direction: column; overflow: hidden; padding: 18px 0 0 16px; background: #ebfaec; }

/* Buttons */
.btn {
  position: relative;
  display: flex;
  align-items: center;
  flex: none;
  width: 48px;
  height: 42px;
  padding-left: 4px;
  border: 2px solid #a0a0a0;
  background: #f7f7f7;
  box-shadow: inset 0 2px #fff;
  color: #000;
  white-space: nowrap;
}
.btn svg { width: 32px; height: 32px; color: #666; }
.wide { gap: 12px; padding-left: 10px; }
.mid { width: 58px; padding-left: 10px; }
.btn.more { width: 20px; align-items: flex-end; padding: 0 0 6px 4px; }
.more svg, .btn .drop { width: 8px; height: 8px; color: #1a1a1a; }
.dim svg { color: #b5b5b5; }
.split { display: flex; }
.btn .drop { position: absolute; right: 4px; bottom: 6px; }

/* Search row */
.search { display: flex; align-items: center; height: 42px; flex: none; margin-bottom: 48px; }
.lbl-show { width: 176px; }
.lbl-find { width: 176px; margin-left: 69px; }
select {
  appearance: none;
  height: 42px;
  border: 2px solid #bdbdbd;
  background: #fff url("data:image/svg+xml,%3Csvg xmlns='http://www.w3.org/2000/svg' width='16' height='12'%3E%3Cpath d='m2 2 6 7 6-7' fill='none' stroke='%23666' stroke-width='3.500'/%3E%3C/svg%3E") no-repeat right 6px center;
  padding: 0 22px 0 4px;
}
.sel-show { width: 523px; }
.sel-find { width: 364px; }
.find-value { width: 332px; height: 42px; margin-left: 4px; border: 2px solid #bdbdbd; background: #fff; }
.search .btn, .side .btn { width: 44px; }
.search .btn svg, .side .btn svg { width: 30px; height: 30px; }
.search .execute { margin-left: 36px; }
.search .advanced { width: 348px; margin: 0 4px 0 148px; padding: 0; justify-content: center; }

/* Tabbed blocks: content column plus a free column on the right */
.block { display: grid; grid-template-columns: minmax(0, 1fr) 606px; flex: none; }
.block.last { flex: 1; min-height: 0; }
.column { display: flex; flex-direction: column; min-height: 0; }
.side { padding: 2px 0 0 16px; }
.tabs { display: flex; align-items: flex-end; height: 44px; flex: none; padding-left: 26px; }
.tab {
  position: relative;
  height: 40px;
  padding-left: 32px;
  text-align: left;
  white-space: nowrap;
  line-height: 32px;
  background: #fff;
  border: solid #a0a0a0;
  border-width: 2px 2px 4px 0;
  border-bottom-color: #b9b9b9;
}
.tab.active { height: 44px; padding-left: 53px; border: 0; background: #009fe8; color: #fff; line-height: 42px; }
.notch { position: absolute; z-index: 1; top: 100%; left: calc(50% - 12px); width: 20px; height: 16px; }
.panel { flex: 1; min-height: 0; display: flex; flex-direction: column; padding: 12px 0 0; background: #f6fcf6; }
.panel::before { content: ""; height: 4px; flex: none; background: #00e800; }

.toolbar { display: flex; gap: 24px; flex: none; }
.group { display: flex; gap: 4px; }
.upper { margin: 36px 16px 0; }
.upper .btn { height: 44px; border-bottom: 0; }
.inner { padding: 8px 0 8px 54px; }
.inner .btn { height: 46px; }
.focused .corners { position: absolute; z-index: 1; left: -6px; top: -6px; width: 56px; height: 52px; }

.grid { flex: 1; min-height: 0; display: flex; flex-direction: column; margin: 0 16px; background: #f9f9f9; border: solid #c8c8c8; border-width: 2px 2px 0; }
.grid-top { min-height: 414px; margin-bottom: 44px; border-bottom-width: 2px; }
.table-wrap { flex: 1; overflow: hidden; }
table { table-layout: fixed; border-collapse: separate; border-spacing: 0; }
.units { width: 2232px; }
.deliveries { width: 2254px; }
th { height: 52px; padding: 0 0 0 8px; overflow: hidden; background: #e4e4e4; border: solid #c8c8c8; border-width: 2px 2px 2px 0; font-weight: 400; text-align: left; white-space: nowrap; line-height: 36px; }
th.num { text-align: right; padding: 0 6px 0 0; }
th svg { width: 30px; height: 30px; }
td { height: 44px; padding: 0 0 6px 6px; background: #c2e1ee; border: solid #c8c8c8; border-width: 0 2px 2px 0; font-size: 28px; line-height: 36px; white-space: nowrap; }
td.word { font-size: 26px; }
td.num { text-align: right; padding-right: 6px; }
td.mark { background: #007fc8; }
td.mode { background: #e1f2fa; }
td.mode, td.icon { padding: 0 4px 4px 0; }
td svg { width: 32px; height: 32px; margin: 0 auto; }

.c46 { width: 46px; } .c74 { width: 74px; } .c86 { width: 86px; } .c96 { width: 96px; }
.c102 { width: 102px; } .c110 { width: 110px; } .c114 { width: 114px; } .c130 { width: 130px; }
.c134 { width: 134px; } .c136 { width: 136px; } .c142 { width: 142px; } .c144 { width: 144px; }
.c148 { width: 148px; } .c150 { width: 150px; } .c152 { width: 152px; } .c154 { width: 154px; }
.c160 { width: 160px; } .c164 { width: 164px; } .c168 { width: 168px; } .c176 { width: 176px; } .c184 { width: 184px; }
.w126 { width: 126px; } .w154 { width: 154px; } .w189 { width: 189px; } .w212 { width: 212px; }
.w220 { width: 220px; } .w222 { width: 222px; } .w250 { width: 250px; } .w252 { width: 252px; }
.w259 { width: 259px; } .w263 { width: 263px; } .w276 { width: 276px; } .w304 { width: 304px; }
.w318 { width: 318px; } .w322 { width: 322px; } .w327 { width: 327px; } .w366 { width: 366px; }

.hscroll { height: 36px; border-top: 2px solid #c8c8c8; padding-left: 660px; }
.track { display: flex; align-items: center; height: 34px; padding: 0 6px; background: #f1f1f1; }
.track svg { width: 20px; height: 20px; }
.left { transform: rotate(90deg); }
.right { transform: rotate(-90deg); margin-left: auto; }
.thumb { display: flex; align-items: center; justify-content: center; gap: 2px; background: #b5c2ce; }
.thumb i { background: #fff; width: 4px; height: 8px; }
.track .thumb { width: 136px; height: 22px; margin-left: 8px; }

.facts { display: grid; grid-template-columns: 256px 337px 350px 257px auto; flex: none; height: 82px; padding: 38px 16px 8px; }
.figure { font-size: 28px; }
.facts + .upper { margin-top: 0; }

.vscroll { display: flex; flex-direction: column; align-items: center; width: 34px; flex: none; padding: 6px 0; background: #f1f1f1; }
.vscroll svg { width: 20px; height: 20px; }
.up { transform: rotate(180deg); }
.vtrack { flex: 1; padding-top: 6px; }
.vscroll .thumb { flex-direction: column; width: 22px; height: 84%; }
.vscroll .thumb i { width: 8px; height: 4px; }

/* Status bar */
.status {
  display: grid;
  grid-template-columns: 1fr auto 1fr;
  align-items: center;
  flex: none;
  height: 58px;
  padding: 0 30px;
  background: linear-gradient(#efefef, #e0e0e0);
  border-top: 2px solid #d5d5d5;
  border-bottom: 2px solid #a8a8a8;
}
.message { display: flex; align-items: center; gap: 8px; justify-self: start; height: 44px; padding-right: 16px; background: #f6f6f6; }
.message svg { width: 28px; height: 28px; }
.logo { width: 78px; height: 38px; font-family: "Liberation Sans", sans-serif; }
.session { display: flex; align-items: center; justify-content: flex-end; padding: 0 32px 6px 0; }
.expand { width: 18px; height: 18px; margin-right: 10px; }
.cell { display: flex; align-items: center; gap: 20px; height: 26px; padding: 0 0 0 10px; border-left: 4px solid #c0c0c0; line-height: 26px; }
.cell svg { width: 20px; height: 20px; }
.code { width: 200px; }
.host { width: 138px; }
.mode-ovr { width: 68px; }
```
